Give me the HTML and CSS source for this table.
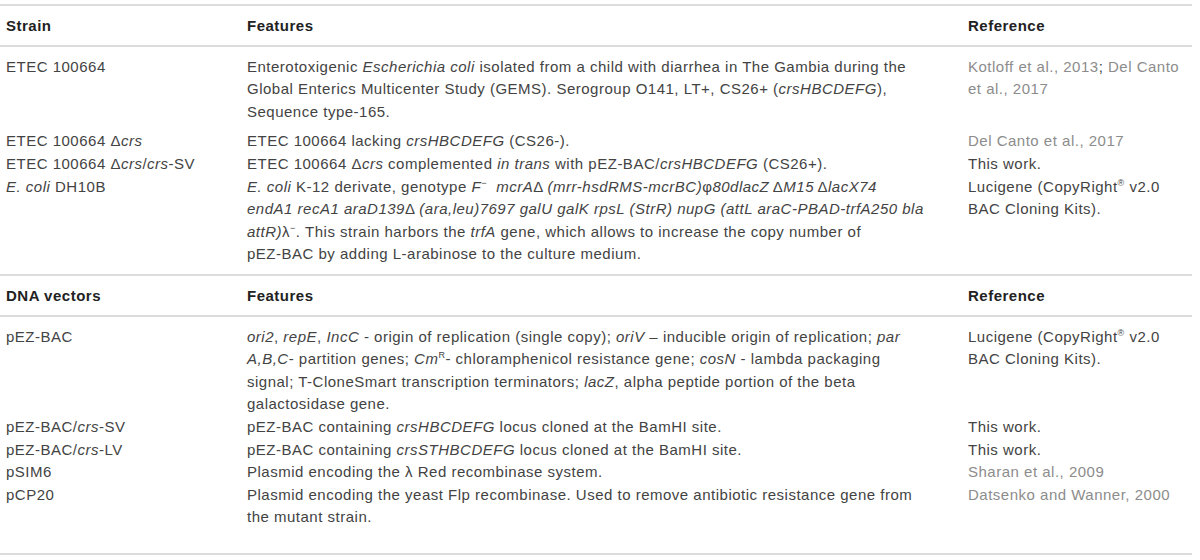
FILE: index.html
```html
<!DOCTYPE html>
<html>
<head>
<meta charset="utf-8">
<link rel="stylesheet" href="styles.css">
</head>
<body>
<table class="strains">
  <colgroup><col class="c1"><col class="c2"><col class="c3"></colgroup>
  <tbody class="section">
    <tr class="head"><th>Strain</th><th>Features</th><th>Reference</th></tr>
    <tr class="first spaced">
      <td>ETEC 100664</td>
      <td>Enterotoxigenic <i>Escherichia coli</i> isolated from a child with diarrhea in The Gambia during the<br>Global Enterics Multicenter Study (GEMS). Serogroup O141, LT+, CS26+ (<i>crsHBCDEFG</i>),<br>Sequence type-165.</td>
      <td><span class="cite">Kotloff et al., 2013</span>; <span class="cite">Del Canto<br>et al., 2017</span></td>
    </tr>
    <tr>
      <td>ETEC 100664 Δ<i>crs</i></td>
      <td>ETEC 100664 lacking <i>crsHBCDEFG</i> (CS26-).</td>
      <td><span class="cite">Del Canto et al., 2017</span></td>
    </tr>
    <tr>
      <td>ETEC 100664 Δ<i>crs</i>/<i>crs</i>-SV</td>
      <td>ETEC 100664 Δ<i>crs</i> complemented <i>in trans</i> with pEZ-BAC/<i>crsHBCDEFG</i> (CS26+).</td>
      <td>This work.</td>
    </tr>
    <tr class="last">
      <td><i>E. coli</i> DH10B</td>
      <td><i>E. coli</i> K-12 derivate, genotype <i>F<sup>−</sup>&nbsp; mcrA</i>Δ <i>(mrr-hsdRMS-mcrBC)</i>φ<i>80dlacZ</i>&#8201;Δ<i>M15</i>&#8201;Δ<i>lacX74</i><br><i>endA1 recA1 araD139</i>Δ <i>(ara,leu)7697 galU galK rpsL (StrR) nupG (attL araC-PBAD-trfA250 bla</i><br><i>attR)</i>λ<sup>−</sup>. This strain harbors the <i>trfA</i> gene, which allows to increase the copy number of<br>pEZ-BAC by adding L-arabinose to the culture medium.</td>
      <td>Lucigene (CopyRight<sup>®</sup> v2.0<br>BAC Cloning Kits).</td>
    </tr>
  </tbody>
  <tbody class="section">
    <tr class="head"><th>DNA vectors</th><th>Features</th><th>Reference</th></tr>
    <tr class="first">
      <td>pEZ-BAC</td>
      <td><i>ori2</i>, <i>repE</i>, <i>IncC</i> - origin of replication (single copy); <i>oriV</i> – inducible origin of replication; <i>par</i><br><i>A,B,C</i>- partition genes; <i>Cm</i><sup>R</sup>- chloramphenicol resistance gene; <i>cosN</i> - lambda packaging<br>signal; T-CloneSmart transcription terminators; <i>lacZ</i>, alpha peptide portion of the beta<br>galactosidase gene.</td>
      <td>Lucigene (CopyRight<sup>®</sup> v2.0<br>BAC Cloning Kits).</td>
    </tr>
    <tr>
      <td>pEZ-BAC/<i>crs</i>-SV</td>
      <td>pEZ-BAC containing <i>crsHBCDEFG</i> locus cloned at the BamHI site.</td>
      <td>This work.</td>
    </tr>
    <tr>
      <td>pEZ-BAC/<i>crs</i>-LV</td>
      <td>pEZ-BAC containing <i>crsSTHBCDEFG</i> locus cloned at the BamHI site.</td>
      <td>This work.</td>
    </tr>
    <tr>
      <td>pSIM6</td>
      <td>Plasmid encoding the λ Red recombinase system.</td>
      <td><span class="cite">Sharan et al., 2009</span></td>
    </tr>
    <tr class="last end">
      <td>pCP20</td>
      <td>Plasmid encoding the yeast Flp recombinase. Used to remove antibiotic resistance gene from<br>the mutant strain.</td>
      <td><span class="cite">Datsenko and Wanner, 2000</span></td>
    </tr>
  </tbody>
</table>
</body>
</html>
```

FILE: styles.css
```css
html, body {
  margin: 0;
  padding: 0;
  background: #ffffff;
}
body {
  padding-top: 4px;
  font-family: "Liberation Sans", Arial, sans-serif;
  font-size: 15px;
  letter-spacing: 0.5px;
  color: #434343;
}
.strains {
  width: 1192px;
  border-collapse: collapse;
  table-layout: fixed;
  border-top: 2px solid #dcdcdc;
}
.c1 { width: 241px; }
.c2 { width: 721px; }
.c3 { width: 230px; }
.section {
  border-bottom: 2px solid #dcdcdc;
}
th, td {
  text-align: left;
  vertical-align: top;
  padding: 0 6px;
  line-height: 22.6px;
  white-space: nowrap;
}
th {
  font-weight: bold;
  color: #222;
  padding-top: 9px;
  padding-bottom: 7px;
}
.head {
  border-bottom: 2px solid #dcdcdc;
}
.first td { padding-top: 9px; }
.spaced td { padding-bottom: 7px; }
.last td { padding-bottom: 8px; }
.end td { padding-bottom: 24px; }
.cite { color: #8c8c8c; }
sup {
  font-size: 9px;
  line-height: 0;
  vertical-align: 6px;
}
```
